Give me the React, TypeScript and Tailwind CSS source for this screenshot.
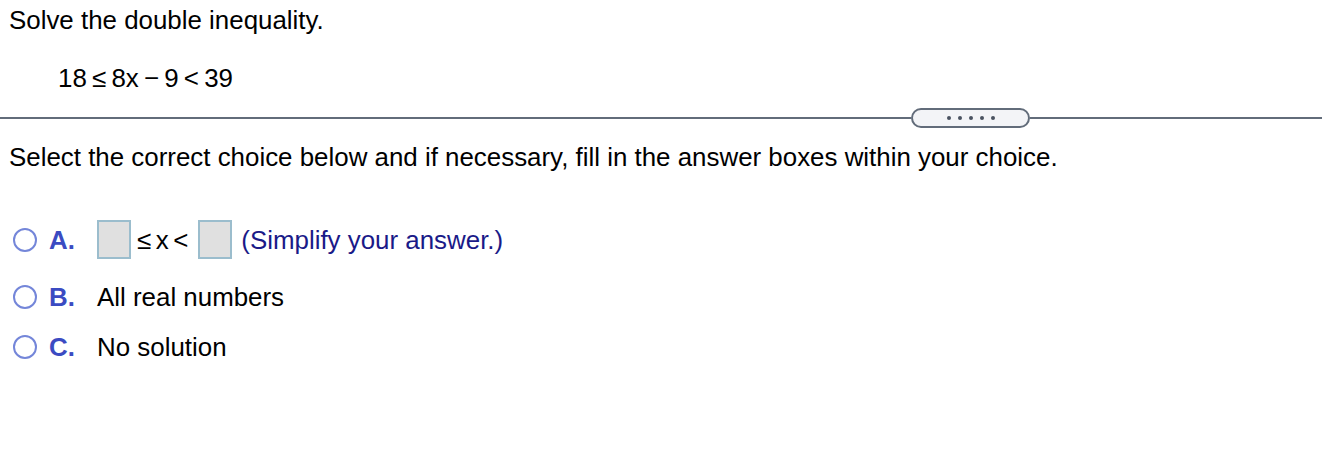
import React from "react";

const Radio = () => (
  <span className="ml-[13px] mr-[12px] inline-block h-[24px] w-[24px] shrink-0 rounded-full border-2 border-[#7486d9]"></span>
);

const AnswerBox = () => (
  <span className="inline-block h-[39px] w-[34px] border-2 border-[#9bbdcd] bg-[#e0e0e0]"></span>
);

const Choice = ({
  letter,
  children,
  className,
}: {
  letter: string;
  children: React.ReactNode;
  className?: string;
}) => (
  <div className={`flex items-center ${className ?? ""}`}>
    <Radio />
    <span className="w-[48px] font-bold text-[#3b4bc2]">{letter}</span>
    {children}
  </div>
);

export default function App() {
  return (
    <div className="min-h-[460px] w-[1322px] bg-white font-['Liberation_Sans',Arial,sans-serif] text-[25.9px] leading-[30px] text-black">
      <p className="pl-[9px] pt-[4.5px]">Solve the double inequality.</p>
      <p className="mt-[28px] pl-[58px] [word-spacing:-2px]">18 ≤ 8x − 9 &lt; 39</p>

      {/* divider with the collapsed pill */}
      <div className="mt-[15.5px] flex h-[20px] items-center">
        <div className="h-[2px] w-[911px] bg-[#626c7a]"></div>
        <div className="flex h-[20px] w-[119px] items-center justify-center gap-[7px] rounded-full border-2 border-[#626c7a] bg-[#f3f4f7]">
          <span className="h-[4px] w-[4px] rounded-full bg-[#4a5260]"></span>
          <span className="h-[4px] w-[4px] rounded-full bg-[#4a5260]"></span>
          <span className="h-[4px] w-[4px] rounded-full bg-[#4a5260]"></span>
          <span className="h-[4px] w-[4px] rounded-full bg-[#4a5260]"></span>
          <span className="h-[4px] w-[4px] rounded-full bg-[#4a5260]"></span>
        </div>
        <div className="h-[2px] flex-1 bg-[#626c7a]"></div>
      </div>

      <p className="mt-[13.5px] pl-[9px]">
        Select the correct choice below and if necessary, fill in the answer boxes within your choice.
      </p>

      <Choice letter="A." className="mt-[48.5px] h-[39px]">
        <AnswerBox />
        <span className="ml-[6px] mr-[10px] flex gap-[4.5px]">
          <span>≤</span>
          <span>x</span>
          <span>&lt;</span>
        </span>
        <AnswerBox />
        <span className="ml-[9px] text-[#1a1a88]">(Simplify your answer.)</span>
      </Choice>
      <Choice letter="B." className="mt-[22.5px]">
        <span>All real numbers</span>
      </Choice>
      <Choice letter="C." className="mt-[20px]">
        <span>No solution</span>
      </Choice>
    </div>
  );
}
